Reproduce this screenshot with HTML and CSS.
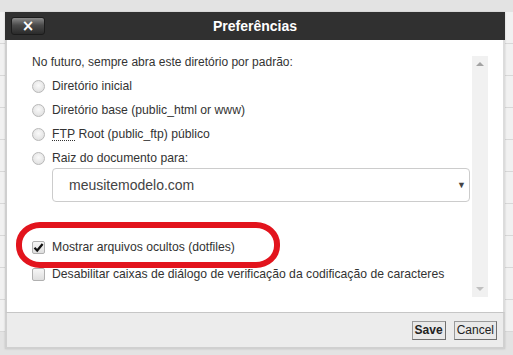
FILE: index.html
```html
<!DOCTYPE html>
<html lang="pt-br">
<head>
  <meta charset="UTF-8"/>
  <title>Preferências</title>
  <link rel="stylesheet" href="styles.css">
</head>
<body>
  <div class="pagina">
    <div class="linha"></div>
    <div class="linha"></div>
    <div class="linha"></div>
    <div class="linha"></div>
    <div class="linha"></div>
    <div class="linha"></div>
    <div class="linha"></div>
    <div class="linha"></div>
    <div class="linha"></div>
    <div class="linha"></div>
  </div>

  <!-- janela de preferencias -->
  <div class="dialogo">
    <div class="cabecalho">
      <button class="fechar">&times;</button>
      <h1>Preferências</h1>
      <span></span>
    </div>
    <div class="corpo">
      <div class="opcoes">
        <p class="aviso">No futuro, sempre abra este diretório por padrão:</p>
        <label class="item"><span class="radio"></span>Diretório inicial</label>
        <label class="item"><span class="radio"></span>Diretório base (public_html or www)</label>
        <label class="item"><span class="radio"></span><abbr>FTP</abbr>&nbsp;Root (public_ftp) público</label>
        <label class="item"><span class="radio"></span>Raiz do documento para:</label>
        <div class="seletor">meusitemodelo.com<span class="seta">&#9660;</span></div>
        <label class="item ocultos">
          <span class="caixa">
            <svg width="11" height="11" viewBox="0 0 11 11"><path d="M1.5 5.8 L4.2 8.5 L9.6 2" fill="none" stroke="#111" stroke-width="2.2"/></svg>
          </span>Mostrar arquivos ocultos (dotfiles)
        </label>
        <label class="item desab"><span class="caixa"></span>Desabilitar caixas de diálogo de verificação da codificação de caracteres</label>
      </div>
      <div class="rolagem">
        <span class="sobe"></span>
        <span class="desce"></span>
      </div>
      <div class="marca"></div>
    </div>
    <div class="rodape">
      <button class="botao salvar">Save</button>
      <button class="botao">Cancel</button>
    </div>
  </div>
</body>
</html>
```

FILE: styles.css
```css
body {
    margin: 0;
    background: #e3e3e3;
    font-family: "Liberation Sans", Arial, sans-serif;
    font-size: 12px;
    color: #333;
    position: relative;
    width: 513px;
    height: 355px;
    overflow: hidden;
}
.pagina {
    padding-top: 12px;
}
.linha {
    height: 31px;
    border-bottom: 1px solid #d8d8d8;
    background: #f1f1f1;
}
.dialogo {
    position: absolute;
    left: 5px;
    top: 12px;
    width: 500px;
    box-shadow: 0 0 2px rgba(0, 0, 0, 0.15);
}
.cabecalho {
    display: grid;
    grid-template-columns: 1fr auto 1fr;
    align-items: center;
    height: 28px;
    background: #303030;
}
.cabecalho h1 {
    margin: 0;
    color: #fff;
    font-size: 14px;
    font-weight: bold;
}
.fechar {
    width: 34px;
    height: 18px;
    margin-left: 6px;
    padding: 0;
    border: 1px solid #1c1c1c;
    border-radius: 3px;
    background: linear-gradient(#8a8a8a, #4a4a4a 45%, #2a2a2a);
    color: #fff;
    font-family: "DejaVu Sans", sans-serif;
    font-size: 15px;
    font-weight: bold;
    line-height: 14px;
}
.corpo {
    position: relative;
    display: flex;
    height: 272px;
    background: #fff;
    border-left: 2px solid #cfcfcf;
    border-right: 2px solid #dcdcdc;
    padding: 0 15px 0 25px;
}
.opcoes {
    flex: 1;
    padding-top: 10px;
}
.aviso {
    margin: 0;
    line-height: 24px;
}
.item {
    display: flex;
    align-items: center;
    height: 24px;
    font-size: 12.2px;
}
.radio {
    width: 13px;
    height: 13px;
    margin-right: 7px;
    border: 1px solid #b8b8b8;
    border-radius: 50%;
    box-sizing: border-box;
    background: radial-gradient(circle at 50% 40%, #fafafa, #dadada);
}
abbr {
    text-decoration: none;
    border-bottom: 1px dotted #333;
    line-height: 12px;
}
.seletor {
    position: relative;
    height: 34px;
    margin: -2px 0 0 20px;
    padding-left: 16px;
    box-sizing: border-box;
    border: 1px solid #cccccc;
    border-radius: 4px;
    font-size: 14px;
    line-height: 32px;
    color: #444;
}
.seta {
    position: absolute;
    right: 3px;
    top: 0;
    font-size: 9px;
    color: #444;
}
.ocultos { margin-top: 33px; }
.desab { margin-top: 3px; }
.caixa {
    display: flex;
    align-items: center;
    justify-content: center;
    width: 13px;
    height: 13px;
    margin-right: 7px;
    box-sizing: border-box;
    border: 1px solid #b0b0b0;
    border-radius: 2px;
    background: linear-gradient(#f6f6f6, #dedede);
}
.rolagem {
    display: flex;
    flex-direction: column;
    justify-content: space-between;
    align-items: center;
    width: 16px;
    height: 241px;
    margin: 16px 0 0 2px;
    background: #f1f1f1;
    padding: 6px 0;
    box-sizing: border-box;
}
.sobe, .desce {
    width: 0;
    height: 0;
    border-left: 4px solid transparent;
    border-right: 4px solid transparent;
}
.sobe { border-bottom: 4px solid #a3a3a3; }
.desce { border-top: 4px solid #c0c0c0; }
.marca {
    position: absolute;
    left: 9px;
    top: 182px;
    width: 264px;
    height: 46px;
    box-sizing: border-box;
    border: 6px solid #e2141d;
    border-radius: 24px / 22px;
}
.rodape {
    display: flex;
    justify-content: flex-end;
    align-items: center;
    gap: 8px;
    height: 34px;
    padding-right: 6px;
    background: #ececec;
    border: 2px solid #d0d0d0;
    border-top: 1px solid #c6c6c6;
}
.botao {
    height: 19px;
    padding: 0 2px;
    border: 1px solid #9a9a9a;
    border-right-color: #6f6f6f;
    border-bottom-color: #6f6f6f;
    background: #e9e9e9;
    font-family: "Liberation Sans", Arial, sans-serif;
    font-size: 12px;
    color: #222;
}
.salvar { font-weight: bold; }
```
